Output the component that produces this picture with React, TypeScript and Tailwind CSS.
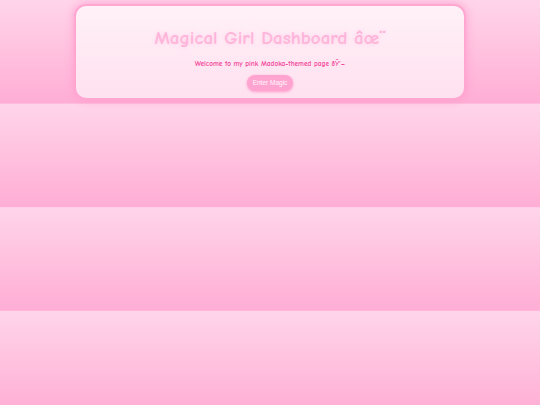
import React from 'react';

export default function App() {
    return (
        <div className="min-h-[405px] w-full bg-linear-to-b from-[#ffd5ea] to-[#ffadd4] bg-[length:100%_103.6px] pt-[4px]">
            {/* Main card */}
            <div className="mx-auto flex h-[96px] w-[392px] flex-col items-center rounded-[12px] border-2 border-[#ffa6d1] bg-linear-to-b from-[#fff1f8] to-[#ffe1ef] pt-[20px] shadow-[0_0_10px_#ff9ccd]">
                <h1 className="font-['Comic_Sans_MS','Comic_Neue',cursive] text-[19px] leading-[24px] font-bold text-[#ffb4da] [text-shadow:0_0_4px_#ffd0e8]">
                    Magical Girl Dashboard âœ¨
                </h1>
                <p className="mt-[8px] font-['Comic_Sans_MS','Comic_Neue',cursive] text-[7.3px] leading-[12px] font-bold text-[#f2479b]">
                    Welcome to my pink Madoka-themed page ðŸ’–
                </p>
                <button className="mt-[5px] h-[16px] w-[46px] rounded-full bg-[#ffa3d0] font-['Liberation_Sans',Arial,sans-serif] text-[6.5px] text-white/90 shadow-[0_1px_3px_#ff9ccd]">
                    Enter Magic
                </button>
            </div>
        </div>
    );
}
